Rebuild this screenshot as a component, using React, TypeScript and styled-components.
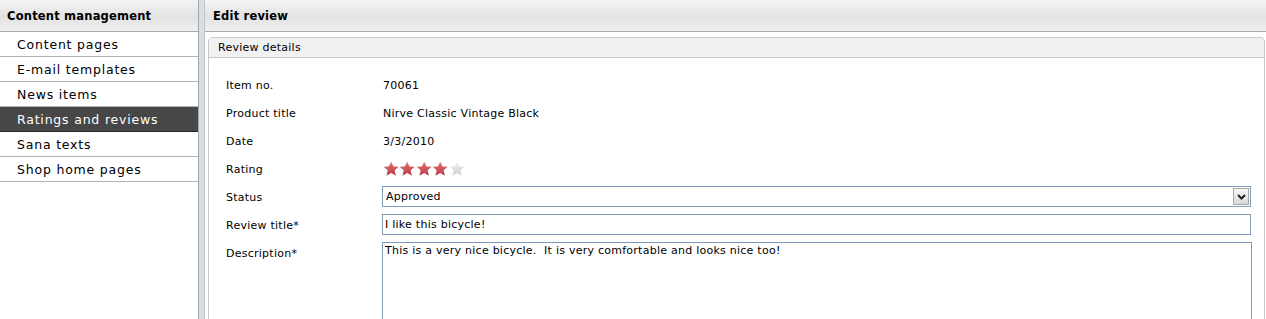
import React from 'react';
import styled, { createGlobalStyle } from 'styled-components';

const GlobalStyle = createGlobalStyle`
  html, body {
    margin: 0;
    padding: 0;
    background: #fff;
    font-family: "DejaVu Sans", Verdana, sans-serif;
    font-size: 11px;
    letter-spacing: 0.25px;
    color: #000;
  }
`;

const Layout = styled.div`
  display: flex;
  width: 1266px;
  height: 319px;
  overflow: hidden;
`;

const Sidebar = styled.div`
  width: 198px;
  flex-shrink: 0;
`;

const BarHeader = styled.div<{ $indent?: number }>`
  height: 32px;
  box-sizing: border-box;
  border-bottom: 1px solid #a9a9a9;
  background: linear-gradient(#f4f4f4, #e2e2e2 55%, #f0f0f0);
  display: flex;
  align-items: center;
  padding-left: ${p => p.$indent ?? 7}px;
  font-weight: bold;
  font-size: 11.5px;
  letter-spacing: 0.2px;
`;

const NavList = styled.ul`
  list-style: none;
  margin: 0;
  padding: 0;
`;

const NavItem = styled.li<{ $active?: boolean }>`
  height: 25px;
  box-sizing: border-box;
  border-bottom: 1px solid ${p => (p.$active ? '#2a2a2a' : '#b4b4b4')};
  display: flex;
  align-items: center;
  padding-left: 17px;
  font-size: 12.5px;
  letter-spacing: 0.8px;
  background: ${p => (p.$active ? '#474747' : '#fff')};
  color: ${p => (p.$active ? '#fff' : '#000')};
`;

const Splitter = styled.div`
  width: 5px;
  flex-shrink: 0;
  background: #d9dee4;
  border-left: 1px solid #a3a7ab;
  border-right: 1px solid #c3c7cb;
`;

const Main = styled.div`
  flex: 1;
  min-width: 0;
  display: flex;
  flex-direction: column;
`;

const Panel = styled.div`
  flex: 1;
  margin: 5px 1px 0 3px;
  border: 1px solid #c8c8c8;
  border-bottom: none;
  border-radius: 5px 5px 0 0;
`;

const PanelTitle = styled.div`
  height: 20px;
  box-sizing: border-box;
  background: #f1f1f1;
  border-bottom: 1px solid #c8c8c8;
  border-radius: 5px 5px 0 0;
  padding: 3px 0 0 9px;
`;

const Form = styled.div`
  display: grid;
  grid-template-columns: 157px 868px;
  grid-auto-rows: 28px;
  padding: 20px 0 0 17px;
`;

const Label = styled.div`
  padding-top: 1px;
`;

const Value = styled.div`
  padding-top: 1px;
`;

const Stars = styled.div`
  display: flex;
  margin-top: -1px;
`;

const SelectBox = styled.div`
  height: 21px;
  box-sizing: border-box;
  border: 1px solid #7f9db9;
  display: flex;
  align-items: center;
  justify-content: space-between;
  padding: 0 1px 0 3px;
  margin: -4px 0 0 -1px;
`;

const DropButton = styled.div`
  width: 16px;
  height: 17px;
  box-sizing: border-box;
  border: 1px solid #a7a7a7;
  background: linear-gradient(#f7f7f7, #d9d9d9);
  display: flex;
  align-items: center;
  justify-content: center;
`;

const TextInput = styled.div`
  height: 21px;
  box-sizing: border-box;
  border: 1px solid #7f9db9;
  padding: 3px 0 0 2px;
  margin: -4px 0 0 -1px;
`;

const TextArea = styled.div`
  height: 90px;
  box-sizing: border-box;
  border: 1px solid #7f9db9;
  padding: 1px 0 0 2px;
  margin: -4px -1px 0 -1px;
`;

function Star({ on }: { on: boolean }) {
  const id = on ? 'starOn' : 'starOff';
  return (
    <svg width="16.4" height="16" viewBox="0 0 16 15.5">
      <defs>
        <linearGradient id={id} x1="0" y1="0" x2="0" y2="1">
          <stop offset="0" stopColor={on ? '#e27279' : '#eeeeee'} />
          <stop offset="1" stopColor={on ? '#b83a44' : '#d0d0d0'} />
        </linearGradient>
      </defs>
      <path
        d="M8 0.6 L10.2 5.2 L15.3 5.6 L11.4 9 L12.6 14.4 L8 11.6 L3.4 14.4 L4.6 9 L0.7 5.6 L5.8 5.2 Z"
        fill={`url(#${id})`}
      />
    </svg>
  );
}

const nav = [
  'Content pages',
  'E-mail templates',
  'News items',
  'Ratings and reviews',
  'Sana texts',
  'Shop home pages',
];

export default function App() {
  return (
    <>
      <GlobalStyle />
      <Layout>
        <Sidebar>
          <BarHeader>Content management</BarHeader>
          <NavList>
            {nav.map(n => (
              <NavItem key={n} $active={n === 'Ratings and reviews'}>
                {n}
              </NavItem>
            ))}
          </NavList>
        </Sidebar>
        <Splitter />
        <Main>
          <BarHeader $indent={8}>Edit review</BarHeader>
          <Panel>
            <PanelTitle>Review details</PanelTitle>
            <Form>
              <Label>Item no.</Label>
              <Value>70061</Value>
              <Label>Product title</Label>
              <Value>Nirve Classic Vintage Black</Value>
              <Label>Date</Label>
              <Value>3/3/2010</Value>
              <Label>Rating</Label>
              <Stars>
                {[1, 2, 3, 4, 5].map(i => (
                  <Star key={i} on={i <= 4} />
                ))}
              </Stars>
              <Label>Status</Label>
              <SelectBox>
                <span>Approved</span>
                <DropButton>
                  <svg width="9" height="6" viewBox="0 0 9 6">
                    <path d="M1 1 L4.5 4.5 L8 1" stroke="#222" strokeWidth="2" fill="none" />
                  </svg>
                </DropButton>
              </SelectBox>
              <Label>Review title*</Label>
              <TextInput>I like this bicycle!</TextInput>
              <Label>Description*</Label>
              <TextArea>This is a very nice bicycle.&nbsp; It is very comfortable and looks nice too!</TextArea>
            </Form>
          </Panel>
        </Main>
      </Layout>
    </>
  );
}
